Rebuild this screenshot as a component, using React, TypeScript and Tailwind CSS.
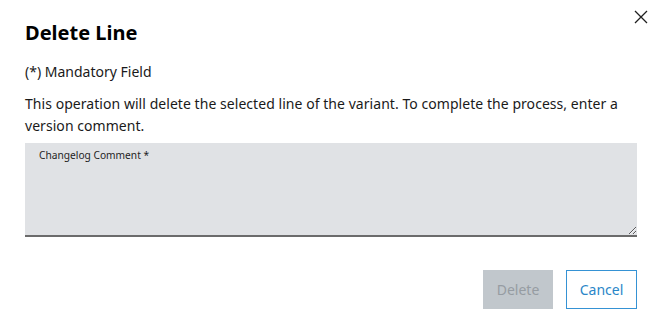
import React from 'react';

const font = { fontFamily: '"Noto Sans", "Liberation Sans", Arial, sans-serif' };

const CloseIcon: React.FC = () => (
  <svg width="14" height="14" viewBox="0 0 14 14" fill="none" stroke="#1f1f1f" strokeWidth="1.3">
    <path d="M1 1 L13 13 M13 1 L1 13" />
  </svg>
);

const App: React.FC = () => {
  return (
    <div className="relative w-[661px] h-[334px] bg-white text-[#1a1a1a]" style={font}>
      <button className="absolute top-[10px] right-[13px] p-0">
        <CloseIcon />
      </button>
      <div className="pl-[25px] pr-[24px] pt-[19px]">
        <h1 className="text-[20px] leading-[28px] font-bold text-black">Delete Line</h1>
        <p className="mt-[15px] text-[14px] leading-[20px]">(*) Mandatory Field</p>
        <p className="mt-[11px] text-[14px] leading-[22px] tracking-[0.05px]">
          This operation will delete the selected line of the variant. To complete the process, enter a version comment.
        </p>
        <div className="relative mt-[6px]">
          <label className="absolute left-[14px] top-[5px] text-[10.2px] leading-[14px] text-[#1f1f1f]">
            Changelog Comment *
          </label>
          <textarea className="block w-full h-[94px] bg-[#e0e2e5] border-b-2 border-[#6b6b6b] pt-[22px] px-[14px] text-[14px] outline-none" />
        </div>
        <div className="flex justify-end gap-[13px] mt-[33px]">
          <button className="w-[70px] h-[39px] bg-[#c1c7cc] text-[#969ca2] text-[14px]" disabled>
            Delete
          </button>
          <button className="w-[71px] h-[39px] border border-[#3592d4] text-[#2a86c8] text-[14px] bg-white">
            Cancel
          </button>
        </div>
      </div>
    </div>
  );
};

export default App;
